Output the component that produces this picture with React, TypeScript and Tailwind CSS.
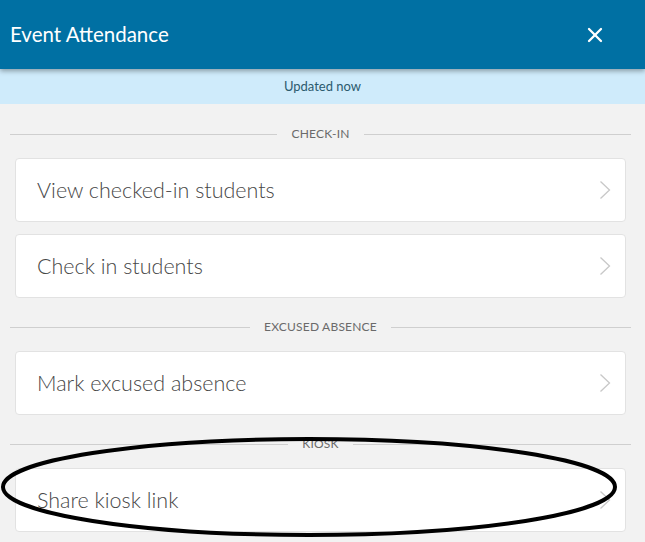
import { X } from "lucide-react";

const font = { fontFamily: "Lato, 'Noto Sans', sans-serif" };

function SectionDivider({ label }: { label: string }) {
  return (
    <div className="flex h-5 items-center gap-[14px]">
      <div className="h-px flex-1 bg-[#cfcfcf]" />
      <span className="text-[12px] uppercase tracking-[0.2px] text-[#6a6a6a]">{label}</span>
      <div className="h-px flex-1 bg-[#cfcfcf]" />
    </div>
  );
}

function Chevron() {
  return (
    <svg width="12" height="20" viewBox="0 0 12 20" fill="none">
      <polyline points="1.5,1.5 10.5,10 1.5,18.5" stroke="#c8c8c8" strokeWidth="1.3" />
    </svg>
  );
}

function ActionCard({ label }: { label: string }) {
  return (
    <button className="mx-[5px] flex h-16 items-center justify-between rounded-[4px] border border-[#e2e2e2] bg-white pl-[21px] pr-[14px] text-left">
      <span className="text-[21.5px] font-light text-[#474747]">{label}</span>
      <Chevron />
    </button>
  );
}

export default function App() {
  return (
    <div className="relative h-[542px] w-[645px] overflow-hidden bg-[#f2f2f2]" style={font}>
      <header className="relative z-10 flex h-[69px] items-center justify-between bg-[#0070a3] pl-[10px] pr-[38px] shadow-[0_2px_5px_rgba(0,0,0,0.35)]">
        <h1 className="text-[20.5px] text-white">Event Attendance</h1>
        <X className="h-6 w-6 text-white" strokeWidth={2.3} />
      </header>
      <div className="flex h-[35px] items-center justify-center bg-[#cfebfb] text-[13px] text-[#2b5a6e]">
        Updated now
      </div>

      <div className="flex flex-col pl-[10px] pr-[14px] pt-5">
        <SectionDivider label="Check-in" />
        <div className="mt-[14px] flex flex-col gap-3">
          <ActionCard label="View checked-in students" />
          <ActionCard label="Check in students" />
        </div>

        <div className="mt-[19px]">
          <SectionDivider label="Excused absence" />
        </div>
        <div className="mt-[14px] flex flex-col">
          <ActionCard label="Mark excused absence" />
        </div>

        <div className="mt-[19px]">
          <SectionDivider label="Kiosk" />
        </div>
        <div className="mt-[14px] flex flex-col">
          <ActionCard label="Share kiosk link" />
        </div>
      </div>

      {/* hand-drawn annotation around the kiosk row */}
      <svg className="pointer-events-none absolute left-0 top-0" width="645" height="542">
        <ellipse cx="309" cy="487" rx="306" ry="48" fill="none" stroke="#000" strokeWidth="4" />
      </svg>
    </div>
  );
}
